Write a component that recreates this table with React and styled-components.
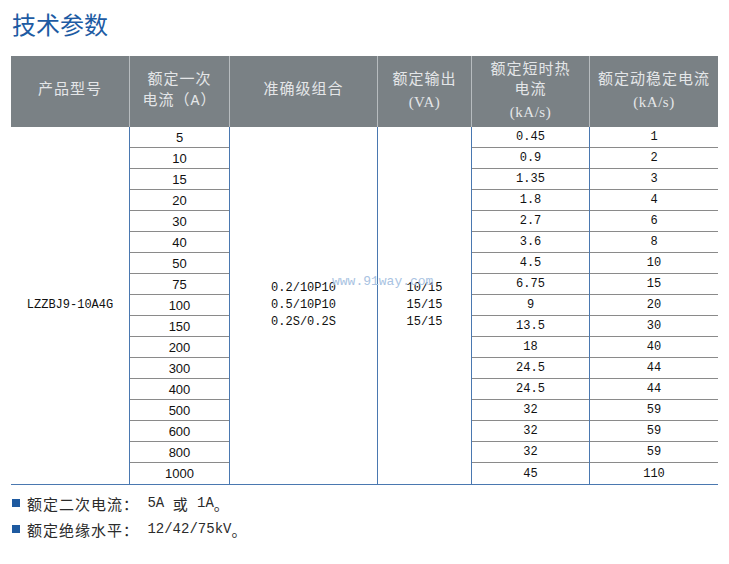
import React from 'react';
import styled, { createGlobalStyle } from 'styled-components';

const GlobalStyle = createGlobalStyle`
  html, body {
    margin: 0;
    padding: 0;
    background: #ffffff;
  }
  * {
    box-sizing: border-box;
  }
`;

const widths = [118, 100, 148, 94, 118, 129];

const rows = [
  ['5', '0.45', '1'],
  ['10', '0.9', '2'],
  ['15', '1.35', '3'],
  ['20', '1.8', '4'],
  ['30', '2.7', '6'],
  ['40', '3.6', '8'],
  ['50', '4.5', '10'],
  ['75', '6.75', '15'],
  ['100', '9', '20'],
  ['150', '13.5', '30'],
  ['200', '18', '40'],
  ['300', '24.5', '44'],
  ['400', '24.5', '44'],
  ['500', '32', '59'],
  ['600', '32', '59'],
  ['800', '32', '59'],
  ['1000', '45', '110'],
];

const Page = styled.div`
  padding: 6px 0 0 11px;
  width: 729px;
  font-family: 'Noto Sans CJK SC', sans-serif;
`;

const Title = styled.h1`
  margin: 0 0 14px 1px;
  height: 36px;
  font-size: 24px;
  line-height: 36px;
  font-weight: 400;
  color: #1d5ba3;
`;

const Table = styled.div`
  position: relative;
  width: 707px;
`;

const HeadRow = styled.div`
  display: flex;
  height: 71px;
  background: #7a8185;
`;

const HeadCell = styled.div`
  width: ${(p) => p.$w}px;
  display: flex;
  flex-direction: column;
  align-items: center;
  justify-content: center;
  border-left: ${(p) => (p.$first ? 'none' : '1px solid #b7bcbf')};
  color: #e4e6e8;
  font-family: 'Liberation Mono', 'Noto Sans CJK SC', monospace;
  font-size: 15px;
  letter-spacing: 1px;
  line-height: 20.5px;
  text-align: center;
`;

const Unit = styled.span`
  font-family: 'Liberation Serif', serif;
  font-size: 15px;
  letter-spacing: 0.5px;
`;

const Body = styled.div`
  display: flex;
  border-bottom: 1px solid #4a78b0;
`;

const Column = styled.div`
  width: ${(p) => p.$w}px;
  border-left: ${(p) => (p.$line ? '1px solid #4a78b0' : 'none')};
  display: flex;
  flex-direction: column;
`;

const SpanColumn = styled(Column)`
  align-items: center;
  justify-content: center;
  font-family: 'Liberation Mono', monospace;
  font-size: 12px;
  line-height: 17px;
  color: #111;
  text-align: center;
`;

const Cell = styled.div`
  height: 21px;
  display: flex;
  align-items: center;
  justify-content: center;
  border-bottom: ${(p) => (p.$last ? 'none' : '1px solid #8a8a8a')};
  color: #111;
  font-family: ${(p) =>
    p.$sans ? "'Liberation Sans', Arial, sans-serif" : "'Liberation Mono', monospace"};
  font-size: ${(p) => (p.$sans ? '13px' : '12px')};
`;

const Watermark = styled.div`
  position: absolute;
  left: 321px;
  top: 218px;
  font-family: 'Liberation Mono', monospace;
  font-size: 13px;
  color: #a9c3e2;
  pointer-events: none;
`;

const Notes = styled.div`
  padding-top: 5px;
`;

const Note = styled.div`
  display: flex;
  align-items: center;
  height: 26px;
  padding-left: 1px;
  font-family: 'Noto Sans CJK SC', sans-serif;
  font-size: 15px;
  letter-spacing: 1px;
  color: #2b2b2b;
  white-space: pre;
`;

const Value = styled.span`
  font-family: 'Liberation Mono', monospace;
  font-size: 14px;
  letter-spacing: 0;
`;

const Bullet = styled.span`
  width: 8px;
  height: 8px;
  margin-right: 7px;
  background: #1e5aa0;
  flex-shrink: 0;
`;

const App = () => {
  return (
    <Page>
      <GlobalStyle />
      <Title>技术参数</Title>
      <Table>
        <HeadRow>
          <HeadCell $w={widths[0]} $first>产品型号</HeadCell>
          <HeadCell $w={widths[1]}>
            <div>额定一次</div>
            <div>电流（A）</div>
          </HeadCell>
          <HeadCell $w={widths[2]}>准确级组合</HeadCell>
          <HeadCell $w={widths[3]}>
            <div>额定输出</div>
            <Unit>(VA)</Unit>
          </HeadCell>
          <HeadCell $w={widths[4]}>
            <div>额定短时热</div>
            <div>电流</div>
            <Unit>(kA/s)</Unit>
          </HeadCell>
          <HeadCell $w={widths[5]}>
            <div>额定动稳定电流</div>
            <Unit>(kA/s)</Unit>
          </HeadCell>
        </HeadRow>
        <Body>
          <SpanColumn $w={widths[0]}>LZZBJ9-10A4G</SpanColumn>
          <Column $w={widths[1]} $line>
            {rows.map((r, i) => (
              <Cell key={r[0]} $sans $last={i === rows.length - 1}>
                {r[0]}
              </Cell>
            ))}
          </Column>
          <SpanColumn $w={widths[2]} $line>
            <div>0.2/10P10</div>
            <div>0.5/10P10</div>
            <div>0.2S/0.2S</div>
          </SpanColumn>
          <SpanColumn $w={widths[3]} $line>
            <div>10/15</div>
            <div>15/15</div>
            <div>15/15</div>
          </SpanColumn>
          <Column $w={widths[4]} $line>
            {rows.map((r, i) => (
              <Cell key={r[0]} $last={i === rows.length - 1}>
                {r[1]}
              </Cell>
            ))}
          </Column>
          <Column $w={widths[5]} $line>
            {rows.map((r, i) => (
              <Cell key={r[0]} $last={i === rows.length - 1}>
                {r[2]}
              </Cell>
            ))}
          </Column>
        </Body>
        <Watermark>www.91way.com</Watermark>
      </Table>
      <Notes>
        <Note>
          <Bullet />
          额定二次电流：<Value> 5A </Value>或<Value> 1A</Value>。
        </Note>
        <Note>
          <Bullet />
          额定绝缘水平：<Value> 12/42/75kV</Value>。
        </Note>
      </Notes>
    </Page>
  );
};

export default App;
